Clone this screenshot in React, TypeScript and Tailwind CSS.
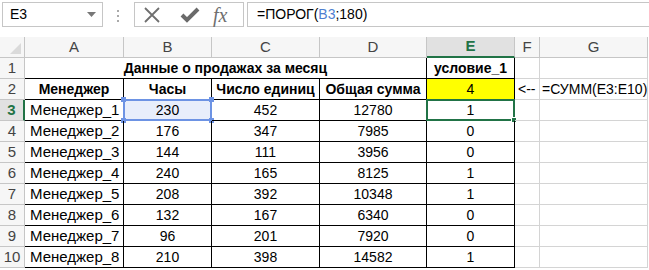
import type { FC, ReactNode } from 'react';

const cols = ['A', 'B', 'C', 'D', 'E', 'F', 'G'];

const rows = [
  ['Менеджер_1', '230', '452', '12780', '1'],
  ['Менеджер_2', '176', '347', '7985', '0'],
  ['Менеджер_3', '144', '111', '3956', '0'],
  ['Менеджер_4', '240', '165', '8125', '1'],
  ['Менеджер_5', '208', '392', '10348', '1'],
  ['Менеджер_6', '132', '167', '6340', '0'],
  ['Менеджер_7', '96', '201', '7920', '0'],
  ['Менеджер_8', '210', '398', '14582', '1'],
];

const Cell: FC<{ className?: string; children?: ReactNode }> = ({ className = '', children }) => (
  <div className={`relative flex items-center pt-[1px] whitespace-nowrap border-r border-b border-[#d4d4d4] ${className}`}>
    {children}
  </div>
);

const RowHead: FC<{ n: number; active?: boolean }> = ({ n, active }) => (
  <div
    className={`flex items-center justify-center pt-[1px] border-b text-[15px] ${
      active
        ? 'bg-[#e1e1e1] text-[#217346] font-bold border-r-2 border-r-[#217346] border-b-[#c6c6c6]'
        : 'bg-[#f6f6f6] text-[#444] border-r border-[#c6c6c6]'
    }`}
  >
    {n}
  </div>
);

const App: FC = () => {
  return (
    <div className="w-[649px] h-[270px] overflow-hidden bg-white text-black" style={{ fontFamily: '"Liberation Sans", Arial, sans-serif' }}>
      {/* formula bar */}
      <div className="flex items-start h-[37px] pt-[2px]">
        <div className="ml-[2px] w-[101px] h-[25px] border border-[#c6c6c6] flex items-center justify-between pl-[7px] pr-[6px] text-[14px]">
          <span>E3</span>
          <svg width="9" height="5" viewBox="0 0 9 5">
            <path d="M0 0 L9 0 L4.5 5 Z" fill="#777" />
          </svg>
        </div>
        <div className="ml-[14px] mt-[8px] flex flex-col gap-[3px]">
          <span className="w-[2px] h-[2px] bg-[#aaa]" />
          <span className="w-[2px] h-[2px] bg-[#aaa]" />
          <span className="w-[2px] h-[2px] bg-[#aaa]" />
        </div>
        <div className="ml-[15px] w-[110px] h-[25px] border border-[#c6c6c6] flex items-center">
          <svg className="ml-[8px]" width="18" height="18" viewBox="0 0 18 18">
            <path d="M2 2 L16 16 M16 2 L2 16" stroke="#6f6f6f" strokeWidth="1.8" />
          </svg>
          <svg className="ml-[19px]" width="20" height="18" viewBox="0 0 20 18">
            <path d="M2 9 L7 14 L18 3" stroke="#6a6a6a" strokeWidth="4" fill="none" />
          </svg>
          <span
            className="ml-[13px] text-[20px] italic text-[#6f6f6f] leading-none"
            style={{ fontFamily: '"Liberation Serif", "Times New Roman", serif' }}
          >
            fx
          </span>
        </div>
        <div className="ml-[3px] flex-1 h-[25px] border border-r-0 border-[#c6c6c6] flex items-center pl-[9px] text-[14px]">
          =ПОРОГ(<span className="text-[#4f7fd1]">B3</span>;180)
        </div>
      </div>

      {/* grid */}
      <div className="grid grid-cols-[25px_99px_88px_108px_107px_88px_25px_108px] auto-rows-[21px] text-[14px]">
        {/* column headers */}
        <div className="relative bg-[#f6f6f6] border-r border-b border-[#c6c6c6]">
          <svg className="absolute right-[3px] bottom-[3px]" width="11" height="11" viewBox="0 0 11 11">
            <path d="M11 0 L11 11 L0 11 Z" fill="#dadada" />
          </svg>
        </div>
        {cols.map((c) => (
          <div
            key={c}
            className={`flex items-center justify-center text-[15px] border-r ${
              c === 'E'
                ? 'bg-[#e1e1e1] text-[#217346] font-bold border-b-2 border-b-[#217346] border-r-[#c6c6c6]'
                : 'bg-[#f6f6f6] text-[#444] border-b border-[#c6c6c6]'
            }`}
          >
            {c}
          </div>
        ))}

        {/* row 1 */}
        <RowHead n={1} />
        <Cell className="col-span-4 justify-center font-bold border-r-black border-b-black">
          Данные о продажах за месяц
        </Cell>
        <Cell className="justify-center font-bold border-r-black border-b-black">условие_1</Cell>
        <Cell />
        <Cell />

        {/* row 2 */}
        <RowHead n={2} />
        <Cell className="justify-center font-bold border-r-black border-b-black">Менеджер</Cell>
        <Cell className="justify-center font-bold border-r-black border-b-black">Часы</Cell>
        <Cell className="justify-center font-bold border-r-black border-b-black">Число единиц</Cell>
        <Cell className="justify-center font-bold border-r-black border-b-black">Общая сумма</Cell>
        <Cell className="justify-center bg-[#ffff00] border-r-black border-b-black">4</Cell>
        <Cell className="pl-[3px]">&lt;--</Cell>
        <Cell className="pl-[2px] overflow-visible">=СУММ(E3:E10)</Cell>

        {/* data rows */}
        {rows.map((r, i) => (
          <div key={r[0]} className="contents">
            <RowHead n={i + 3} active={i === 0} />
            <Cell className="pl-[5px] text-[15px] border-r-black border-b-black">{r[0]}</Cell>
            <Cell className={`justify-center border-r-black border-b-black ${i === 0 ? 'bg-[#e8eefb]' : ''}`}>
              {r[1]}
              {i === 0 && (
                <div className="absolute -left-[1px] -top-[1px] -right-[1px] -bottom-[1px] border-2 border-[#6d93e4]">
                  <span className="absolute -left-[4px] -top-[4px] w-[5px] h-[5px] bg-[#6d93e4]" />
                  <span className="absolute -right-[4px] -top-[4px] w-[5px] h-[5px] bg-[#6d93e4]" />
                  <span className="absolute -left-[4px] -bottom-[4px] w-[5px] h-[5px] bg-[#6d93e4]" />
                  <span className="absolute -right-[4px] -bottom-[4px] w-[5px] h-[5px] bg-[#6d93e4]" />
                </div>
              )}
            </Cell>
            <Cell className="justify-center border-r-black border-b-black">{r[2]}</Cell>
            <Cell className="justify-center border-r-black border-b-black">{r[3]}</Cell>
            <Cell className="justify-center border-r-black border-b-black">
              {r[4]}
              {i === 0 && (
                <div className="absolute -left-[1px] -top-[1px] -right-[1px] -bottom-[1px] border-2 border-[#217346]">
                  <span className="absolute -right-[4px] -bottom-[4px] w-[6px] h-[6px] bg-[#217346] border border-white" />
                </div>
              )}
            </Cell>
            <Cell />
            <Cell />
          </div>
        ))}
      </div>
    </div>
  );
};

export default App;
